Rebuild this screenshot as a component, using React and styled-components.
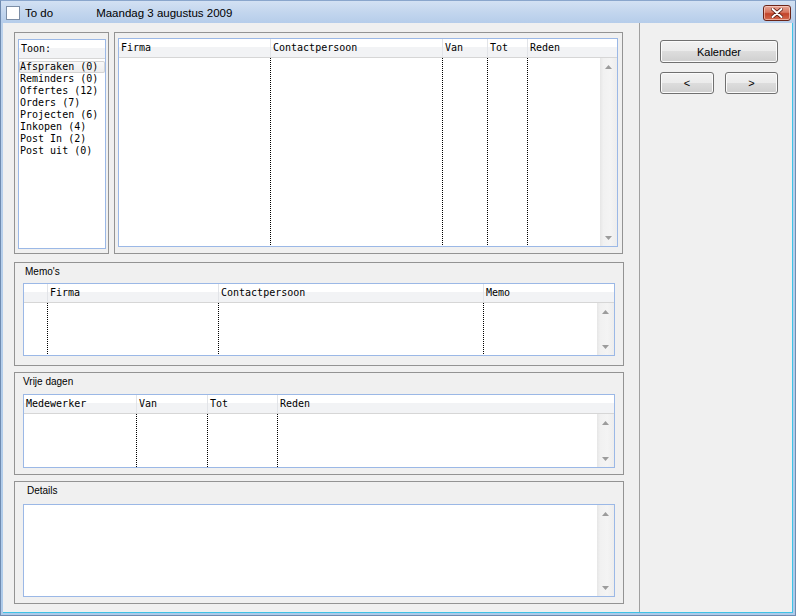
import React from "react";
import styled, { createGlobalStyle } from "styled-components";

const Global = createGlobalStyle`
  html, body { margin: 0; padding: 0; background: #ffffff; }
  * { box-sizing: border-box; }
`;

const PIXEL = `"DejaVu Sans Mono", "Liberation Mono", monospace`;
const UI = `"Liberation Sans", Arial, sans-serif`;

const Window = styled.div`
  width: 796px;
  height: 616px;
  display: flex;
  flex-direction: column;
  background: linear-gradient(#bcd2ec, #aecbea);
  border: 1px solid #6f8bb0;
  border-top-color: #8aa6cc;
`;

const TitleBar = styled.div`
  height: 22px;
  display: flex;
  align-items: center;
  padding: 0 4px 0 5px;
  background: linear-gradient(#d3e1f3 0%, #c3d6ee 50%, #b6cdea 100%);
  font-family: ${UI};
  font-size: 11.5px;
  color: #000;
`;

const TitleIcon = styled.div`
  width: 14px;
  height: 14px;
  background: #fff;
  border: 1px solid #7c8ea6;
  margin-right: 5px;
  margin-top: 2px;
`;

const TitleText = styled.span`
  margin-left: ${(p) => p.$ml || 0}px;
  white-space: nowrap;
  margin-top: 2px;
`;

const CloseButton = styled.div`
  margin-left: auto;
  width: 28px;
  height: 16px;
  margin-top: 2px;
  border: 1px solid #6b2418;
  border-radius: 3px;
  background: linear-gradient(#e6a596 0%, #d7765f 45%, #c2432a 55%, #d36a4e 100%);
  box-shadow: inset 0 0 0 1px rgba(255, 220, 210, 0.6);
  display: flex;
  align-items: center;
  justify-content: center;
`;

const Client = styled.div`
  flex: 1;
  display: flex;
  margin: 0 2px 2px 2px;
  background: #f0f0f0;
  border-bottom: 1px solid #3fc3e6;
`;

const LeftPane = styled.div`
  width: 636px;
  display: flex;
  flex-direction: column;
  padding: 9px 0 0 11px;
`;

const Divider = styled.div`
  width: 1px;
  background: #a0a0a0;
`;

const RightPane = styled.div`
  flex: 1;
  display: flex;
  flex-direction: column;
  padding: 17px 0 0 20px;
  border-right: 1px solid #3fc3e6;
`;

const TopRow = styled.div`
  display: flex;
  gap: 5px;
  height: 222px;
`;

const Panel = styled.div`
  width: ${(p) => p.$w}px;
  height: ${(p) => p.$h}px;
  border: 1px solid #939393;
  padding: ${(p) => p.$pad};
  display: flex;
  flex-direction: column;
  margin-top: ${(p) => p.$mt || 0}px;
  flex-shrink: 0;
`;

const GroupTitle = styled.div`
  height: ${(p) => p.$h}px;
  line-height: 18px;
  padding-left: ${(p) => p.$indent}px;
  font-family: ${UI};
  font-size: 10px;
  color: #000;
  flex-shrink: 0;
`;

const BlueFrame = styled.div`
  border: 1px solid #9bb8e6;
  background: #fff;
  height: ${(p) => p.$h}px;
  display: flex;
  flex-direction: column;
  flex-shrink: 0;
`;

const HeaderRow = styled.div`
  height: 19px;
  display: flex;
  flex-shrink: 0;
  background: linear-gradient(#ffffff 0%, #ffffff 44%, #f2f3f5 45%, #f2f3f5 100%);
  border-bottom: 1px solid #d6d6d6;
`;

const HeaderCell = styled.div`
  ${(p) => (p.$last ? "flex: 1;" : `flex: 0 0 ${p.$w}px;`)}
  border-right: ${(p) => (p.$last ? "none" : "1px solid #e2e4e8")};
  padding-left: 2px;
  font-family: ${PIXEL};
  font-size: 10px;
  line-height: 18px;
  color: #000;
  white-space: nowrap;
  overflow: hidden;
`;

const TableBody = styled.div`
  flex: 1;
  display: flex;
  min-height: 0;
`;

const BodyColumns = styled.div`
  flex: 1;
  display: flex;
`;

const BodyCell = styled.div`
  ${(p) => (p.$last ? "flex: 1;" : `flex: 0 0 ${p.$w}px;`)}
  ${(p) =>
    p.$last
      ? ""
      : `background-image: repeating-linear-gradient(to bottom, #000 0px, #000 1px, transparent 1px, transparent 2px);
         background-size: 1px 100%;
         background-position: right top;
         background-repeat: no-repeat;`}
`;

const ScrollTrack = styled.div`
  width: 17px;
  flex-shrink: 0;
  display: flex;
  flex-direction: column;
  justify-content: space-between;
  background: linear-gradient(to right, #e6e6e6 0%, #f1f1f1 20%, #f4f4f4 60%, #ededed 100%);
`;

const ScrollArrow = styled.div`
  height: 17px;
  display: flex;
  align-items: center;
  justify-content: center;
`;

const Arrow = ({ down }) => (
  <svg width="7" height="4" viewBox="0 0 7 4">
    <polygon
      points={down ? "0,0 7,0 3.5,4" : "0,4 7,4 3.5,0"}
      fill="#9c9c9c"
    />
  </svg>
);

const ScrollBar = () => (
  <ScrollTrack>
    <ScrollArrow>
      <Arrow />
    </ScrollArrow>
    <ScrollArrow>
      <Arrow down />
    </ScrollArrow>
  </ScrollTrack>
);

const ListHeader = styled.div`
  height: 19px;
  flex-shrink: 0;
  padding-left: 2px;
  background: linear-gradient(#ffffff 0%, #ffffff 44%, #f2f3f5 45%, #f2f3f5 100%);
  border-bottom: 1px solid #d6d6d6;
  font-family: ${PIXEL};
  font-size: 10px;
  line-height: 18px;
  color: #000;
`;

const Items = styled.div`
  padding-top: 2px;
  display: flex;
  flex-direction: column;
`;

const Item = styled.div`
  height: 12px;
  line-height: 12px;
  padding-left: 1px;
  font-family: ${PIXEL};
  font-size: 10px;
  color: #000;
  white-space: nowrap;
  border-radius: 2px;
  ${(p) =>
    p.$focus
      ? `background: linear-gradient(#fafafa, #ececec);
         box-shadow: inset 0 0 0 1px #d4d4d4;`
      : ""}
`;

const WideButton = styled.button`
  width: 118px;
  height: 23px;
  padding: 0;
  border: 1px solid #707070;
  border-radius: 3px;
  background: linear-gradient(#f2f2f2 0%, #ebebeb 49%, #dddddd 50%, #cfcfcf 100%);
  box-shadow: inset 0 0 0 1px #fbfbfb;
  font-family: ${UI};
  font-size: 11px;
  color: #000;
`;

const NavRow = styled.div`
  display: flex;
  gap: 11px;
  margin-top: 9px;
`;

const NavButton = styled(WideButton)`
  width: ${(p) => p.$w}px;
  height: 22px;
`;

const TOP_COLS = [
  { label: "Firma", w: 152 },
  { label: "Contactpersoon", w: 172 },
  { label: "Van", w: 45 },
  { label: "Tot", w: 40 },
  { label: "Reden" },
];

const MEMO_COLS = [
  { label: "", w: 24 },
  { label: "Firma", w: 171 },
  { label: "Contactpersoon", w: 265 },
  { label: "Memo" },
];

const VRIJ_COLS = [
  { label: "Medewerker", w: 113 },
  { label: "Van", w: 71 },
  { label: "Tot", w: 70 },
  { label: "Reden" },
];

const ITEMS = [
  "Afspraken (0)",
  "Reminders (0)",
  "Offertes (12)",
  "Orders (7)",
  "Projecten (6)",
  "Inkopen (4)",
  "Post In (2)",
  "Post uit (0)",
];

function DataTable({ columns, height }) {
  const last = columns.length - 1;
  return (
    <BlueFrame $h={height}>
      <HeaderRow>
        {columns.map((c, i) => (
          <HeaderCell key={i} $w={c.w} $last={i === last}>
            {c.label}
          </HeaderCell>
        ))}
      </HeaderRow>
      <TableBody>
        <BodyColumns>
          {columns.map((c, i) => (
            <BodyCell key={i} $w={c.w} $last={i === last} />
          ))}
        </BodyColumns>
        <ScrollBar />
      </TableBody>
    </BlueFrame>
  );
}

export default function App() {
  return (
    <>
      <Global />
      <Window>
        <TitleBar>
          <TitleIcon />
          <TitleText>To do</TitleText>
          <TitleText $ml={43}>Maandag 3 augustus 2009</TitleText>
          <CloseButton>
            <svg width="12" height="10" viewBox="0 0 12 10">
              <path
                d="M1.5 1 L10.5 9 M10.5 1 L1.5 9"
                stroke="#5a1a10"
                strokeWidth="3.6"
                strokeLinecap="round"
              />
              <path
                d="M1.5 1 L10.5 9 M10.5 1 L1.5 9"
                stroke="#ffffff"
                strokeWidth="2"
                strokeLinecap="round"
              />
            </svg>
          </CloseButton>
        </TitleBar>
        <Client>
          <LeftPane>
            <TopRow>
              <Panel $w={95} $h={222} $pad="6px 2px 4px 3px">
                <BlueFrame $h={210}>
                  <ListHeader>Toon:</ListHeader>
                  <Items>
                    {ITEMS.map((t, i) => (
                      <Item key={t} $focus={i === 0}>
                        {t}
                      </Item>
                    ))}
                  </Items>
                </BlueFrame>
              </Panel>
              <Panel $w={509} $h={222} $pad="5px 4px 6px 3px">
                <DataTable columns={TOP_COLS} height={209} />
              </Panel>
            </TopRow>
            <Panel $w={610} $h={104} $mt={8} $pad="0 8px 8px 8px">
              <GroupTitle $h={20} $indent={2}>
                Memo's
              </GroupTitle>
              <DataTable columns={MEMO_COLS} height={73} />
            </Panel>
            <Panel $w={610} $h={103} $mt={6} $pad="0 8px 6px 8px">
              <GroupTitle $h={21} $indent={-2}>
                Vrije dagen
              </GroupTitle>
              <DataTable columns={VRIJ_COLS} height={74} />
            </Panel>
            <Panel $w={610} $h={123} $mt={6} $pad="0 8px 6px 8px">
              <GroupTitle $h={22} $indent={4}>
                Details
              </GroupTitle>
              <BlueFrame $h={93} style={{ flexDirection: "row" }}>
                <BodyColumns />
                <ScrollBar />
              </BlueFrame>
            </Panel>
          </LeftPane>
          <Divider />
          <RightPane>
            <WideButton>Kalender</WideButton>
            <NavRow>
              <NavButton $w={54}>&lt;</NavButton>
              <NavButton $w={53}>&gt;</NavButton>
            </NavRow>
          </RightPane>
        </Client>
      </Window>
    </>
  );
}
